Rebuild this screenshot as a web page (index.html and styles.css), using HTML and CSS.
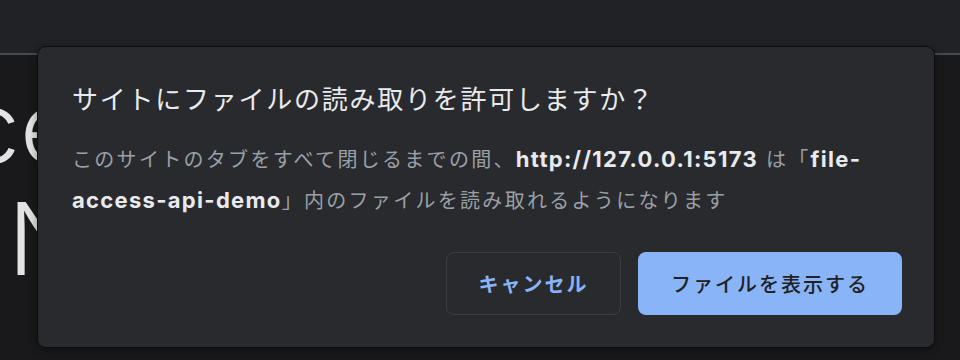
FILE: index.html
```html
<!DOCTYPE html>
<html lang="ja">
<head>
    <meta charset="UTF-8">
    <meta name="viewport" content="width=device-width, initial-scale=1.0">
    <title>File access</title>
    <link rel="stylesheet" href="styles.css">
</head>
<body>
    <div class="toolbar"></div>
    <div class="page">
        <div class="page-title">
            <div class="line-one">ce</div>
            <div class="line-two">N</div>
        </div>
    </div>

    <div class="dialog">
        <h2 class="dialog-title">サイトにファイルの読み取りを許可しますか？</h2>
        <p class="dialog-text">このサイトのタブをすべて閉じるまでの間、<b>http://127.0.0.1:5173</b> は「<b>file-</b><br><b>access-api-demo</b>」内のファイルを読み取れるようになります</p>
        <div class="dialog-buttons">
            <button class="btn btn-cancel">キャンセル</button>
            <button class="btn btn-primary">ファイルを表示する</button>
        </div>
    </div>
</body>
</html>
```

FILE: styles.css
```css
* {
    box-sizing: border-box;
}

body {
    margin: 0;
    height: 360px;
    overflow: hidden;
    background-color: #19191b;
    font-family: "Inter", "Noto Sans CJK JP", sans-serif;
    position: relative;
}

.toolbar {
    height: 53px;
    background-color: #212226;
}

.page {
    border-top: 2px solid #48494c;
    background-color: #19191b;
    height: 307px;
}

.page-title {
    padding-top: 16px;
    font-size: 100px;
    font-weight: 300;
    line-height: 112px;
    color: #e3e3e3;
    white-space: nowrap;
}

.line-one {
    margin-left: -36px;
}

.line-two {
    margin-left: 8px;
}

/* permission dialog on top of the page */
.dialog {
    position: absolute;
    top: 46px;
    left: 37px;
    width: 898px;
    height: 302px;
    background-color: #292a2e;
    border: 1px solid #0d0e10;
    border-radius: 9px;
    box-shadow: 0 2px 8px rgba(0, 0, 0, 0.4);
    padding: 36px 32px 32px 34px;
    display: flex;
    flex-direction: column;
}

.dialog-title {
    margin: 0;
    font-size: 26px;
    font-weight: 400;
    line-height: 34px;
    letter-spacing: 1.75px;
    color: #e8eaed;
}

.dialog-text {
    margin: 22px 0 0;
    font-size: 20px;
    line-height: 40px;
    letter-spacing: 2.3px;
    color: #9aa0a6;
    white-space: nowrap;
}

.dialog-text b {
    color: #e8eaed;
    font-size: 22px;
    font-weight: 700;
    letter-spacing: 1.3px;
}

.dialog-buttons {
    margin-top: auto;
    display: flex;
    justify-content: flex-end;
    gap: 17px;
}

.btn {
    height: 63px;
    border-radius: 8px;
    font-family: inherit;
    font-size: 20px;
    letter-spacing: 2px;
    cursor: pointer;
}

.btn-cancel {
    width: 175px;
    background-color: transparent;
    border: 1px solid #3c3d41;
    color: #8ab4f8;
    font-weight: 700;
}

.btn-primary {
    width: 264px;
    background-color: #8ab4f8;
    border: none;
    color: #202124;
    font-weight: 500;
}
```
